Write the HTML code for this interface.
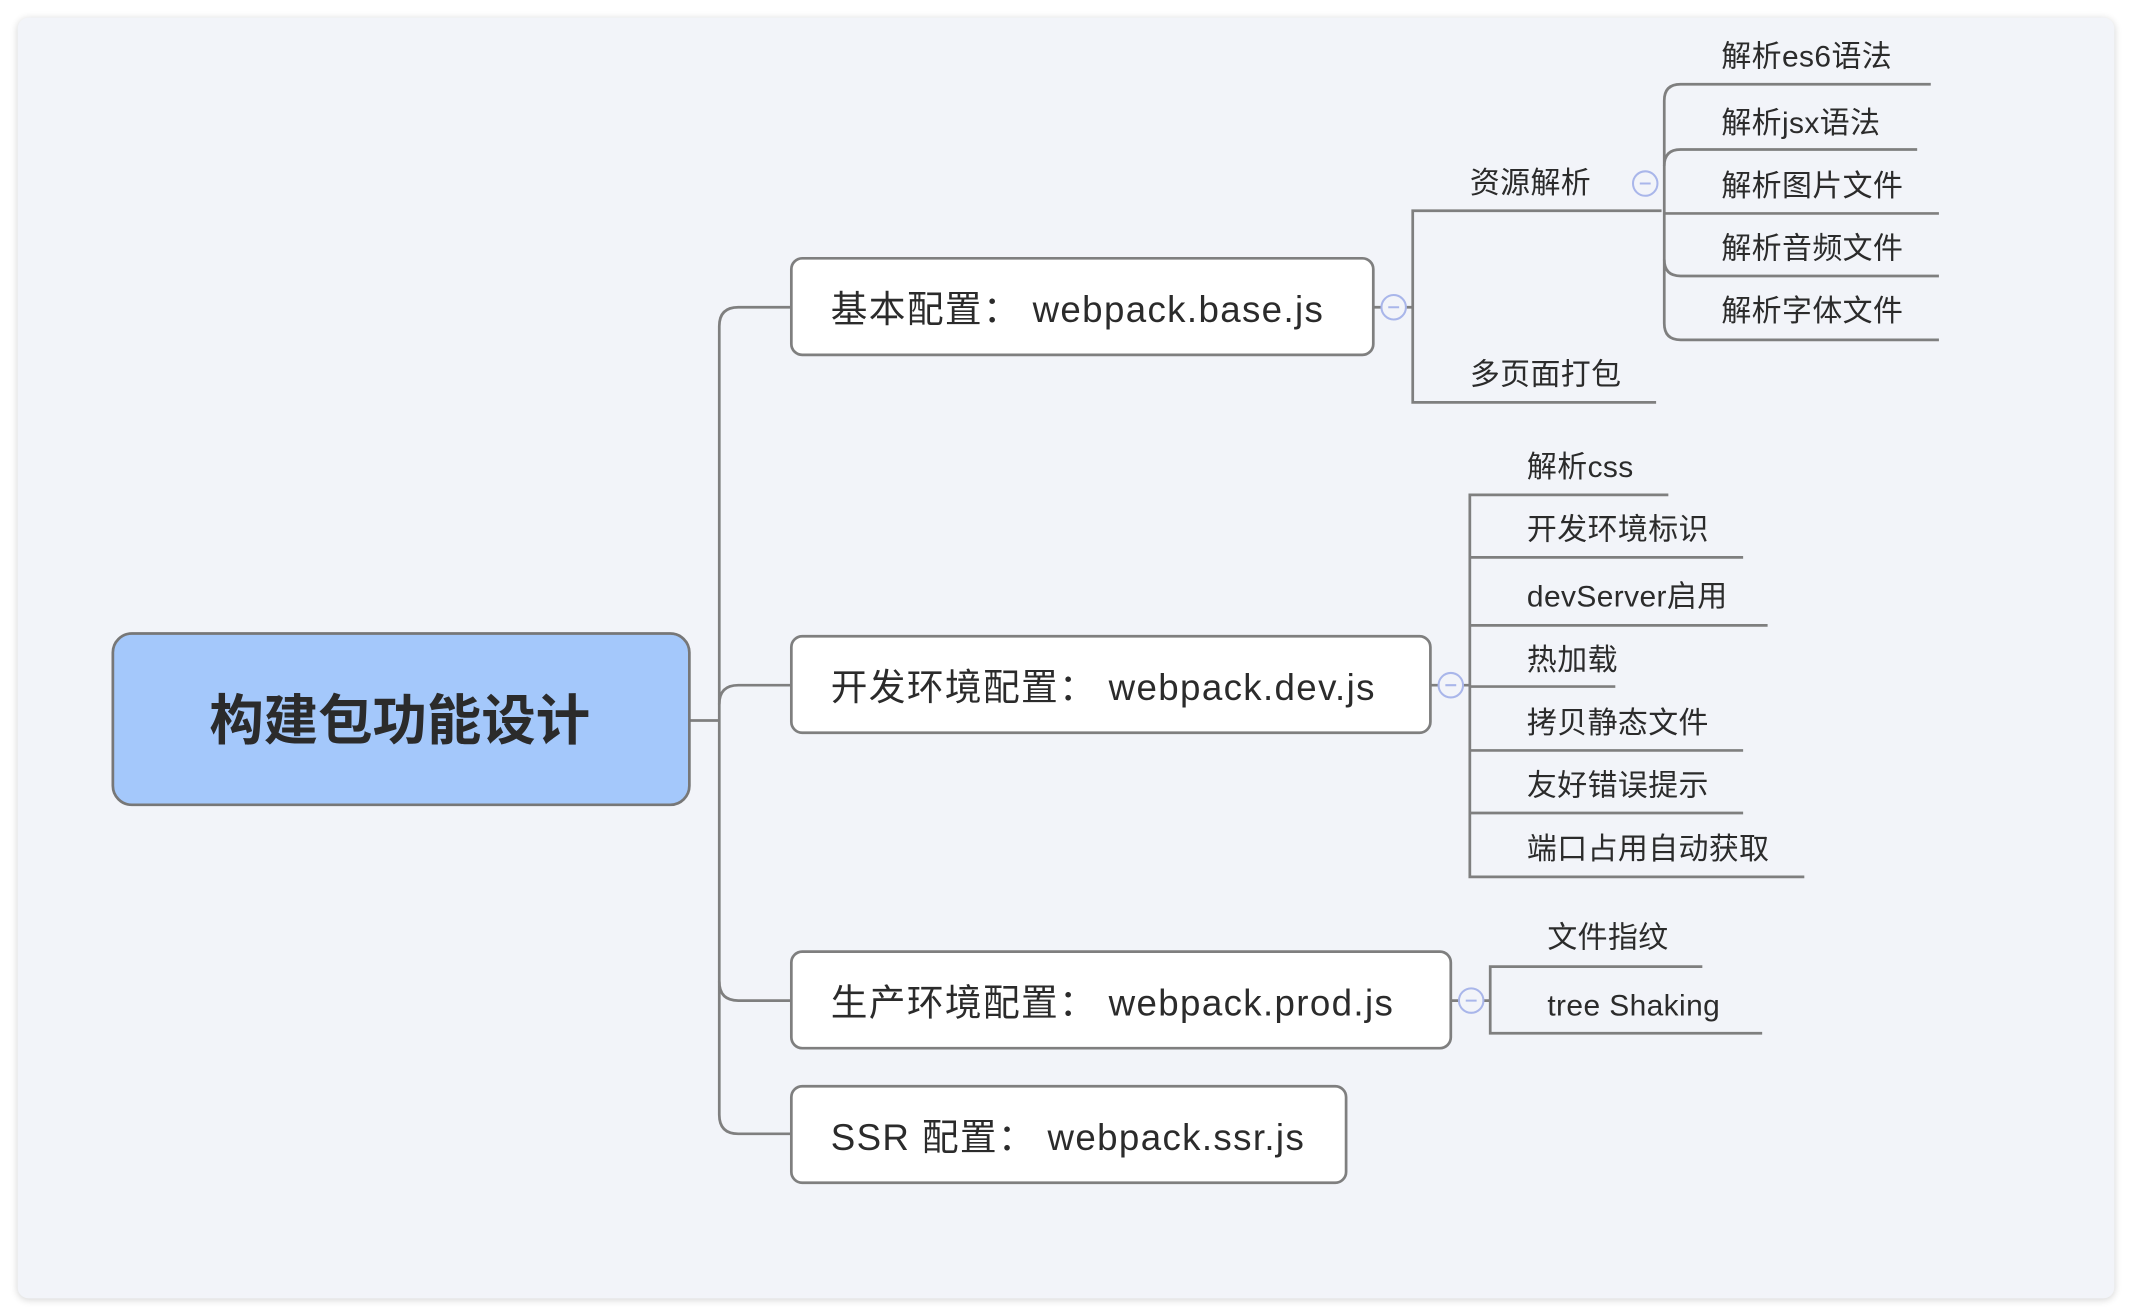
<!DOCTYPE html>
<html><head><meta charset="utf-8"><style>
html,body{margin:0;padding:0;background:#fff;width:2132px;height:1316px;overflow:hidden}
svg{display:block}
text{font-family:"Liberation Sans","Noto Sans CJK SC",sans-serif;fill:#2b2b2b;white-space:pre}
</style></head><body>
<svg width="2132" height="1316" viewBox="0 0 1568 968" preserveAspectRatio="none">
<defs><filter id="sh" x="-5%" y="-5%" width="110%" height="110%"><feGaussianBlur stdDeviation="3"/></filter></defs>
<rect x="13" y="14" width="1542" height="942" rx="8" fill="#000" opacity="0.18" filter="url(#sh)"/>
<rect x="13" y="13" width="1542" height="942" rx="8" fill="#f2f4f9"/>
<g fill="none" stroke="#7f7f7f" stroke-width="2">
<path d="M507 530H529"/>
<path d="M582 226H543Q529 226 529 240V820Q529 834 543 834H582"/>
<path d="M529 518Q529 504 543 504H582"/>
<path d="M529 722Q529 736 543 736H582"/>
<path d="M1010 226H1039"/>
<path d="M1222 155H1039V296H1218"/>
<path d="M1420 62H1236Q1224 62 1224 74V238Q1224 250 1236 250H1426"/>
<path d="M1410 110H1236Q1224 110 1224 122"/>
<path d="M1426 157H1224"/>
<path d="M1426 203H1236Q1224 203 1224 191"/>
<path d="M1052 504H1081"/>
<path d="M1227 364H1081V645H1327"/>
<path d="M1081 410H1282M1081 460H1300M1081 505H1188M1081 552H1282M1081 598H1282"/>
<path d="M1067 736H1096"/>
<path d="M1252 711H1096V760H1296"/>
</g>
<rect x="83" y="466" width="424" height="126" rx="14" fill="#a4c8fb" stroke="#777" stroke-width="2"/>
<text x="294" y="544" font-size="40" font-weight="bold" text-anchor="middle" fill="#3a3a3a">构建包功能设计</text>
<g fill="#fff" stroke="#7f7f7f" stroke-width="2">
<rect x="582" y="190" width="428" height="71" rx="8"/>
<rect x="582" y="468" width="470" height="71" rx="8"/>
<rect x="582" y="700" width="485" height="71" rx="8"/>
<rect x="582" y="799" width="408" height="71" rx="8"/>
</g>
<g font-size="27" letter-spacing="1">
<text x="611" y="237" xml:space="preserve">基本配置： webpack.base.js</text>
<text x="611" y="515" xml:space="preserve">开发环境配置： webpack.dev.js</text>
<text x="611" y="747" xml:space="preserve">生产环境配置： webpack.prod.js</text>
<text x="611" y="846" xml:space="preserve">SSR 配置： webpack.ssr.js</text>
</g>
<g fill="#f2f4f9" stroke="#a9b6ea" stroke-width="1.5">
<circle cx="1025" cy="226" r="9"/><circle cx="1067" cy="504" r="9"/><circle cx="1082" cy="736" r="9"/><circle cx="1210" cy="135" r="9"/>
</g>
<g stroke="#a9b6ea" stroke-width="1.5">
<path d="M1021 226h8M1063 504h8M1078 736h8M1206 135h8"/>
</g>
<g font-size="22" letter-spacing="0.3">
<text x="1081" y="142">资源解析</text>
<text x="1081" y="283">多页面打包</text>
<text x="1266" y="49">解析es6语法</text>
<text x="1266" y="98">解析jsx语法</text>
<text x="1266" y="144">解析图片文件</text>
<text x="1266" y="190">解析音频文件</text>
<text x="1266" y="236">解析字体文件</text>
<text x="1123" y="351">解析css</text>
<text x="1123" y="397">开发环境标识</text>
<text x="1123" y="446">devServer启用</text>
<text x="1123" y="493">热加载</text>
<text x="1123" y="539">拷贝静态文件</text>
<text x="1123" y="585">友好错误提示</text>
<text x="1123" y="632">端口占用自动获取</text>
<text x="1138" y="697">文件指纹</text>
<text x="1138" y="747">tree Shaking</text>
</g>
</svg>
</body></html>
